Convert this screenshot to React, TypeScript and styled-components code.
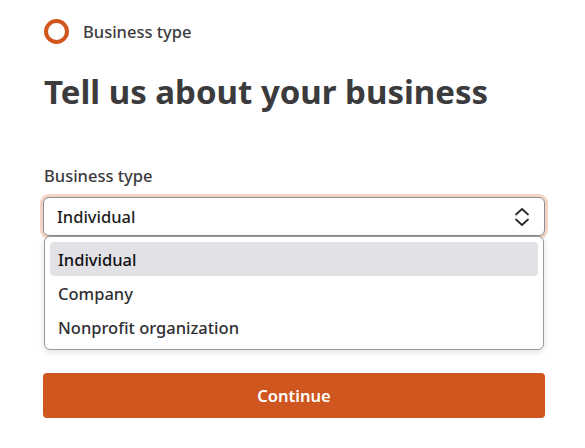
import * as React from 'react'
import styled, { createGlobalStyle } from 'styled-components';

const GlobalStyle = createGlobalStyle`
    body {
        margin: 0;
        background: #ffffff;
        font-family: "Noto Sans", "Open Sans", sans-serif;
        color: #3b3b3d;
    }
`;

const Page = styled.div`
    width: 502px;
    padding: 18px 0 0 43px;
`;

const Step = styled.div`
    display: flex;
    align-items: center;
    gap: 14px;
    height: 26px;
    padding-left: 1px;
`;

const StepRing = styled.div`
    width: 17px;
    height: 17px;
    border-radius: 50%;
    border: 4px solid #d0561f;
`;

const StepText = styled.span`
    font-size: 16.5px;
    font-weight: 500;
    color: #3b3b3d;
`;

const Heading = styled.h1`
    margin: 26px 0 0 1px;
    font-size: 33px;
    line-height: 44px;
    font-weight: 700;
    color: #3b3b3d;
`;

const Label = styled.div`
    margin: 51px 0 0 1px;
    font-size: 16.5px;
    font-weight: 500;
    line-height: 22px;
`;

const Field = styled.div`
    position: relative;
    margin-top: 10px;
`;

const SelectBox = styled.button`
    display: flex;
    align-items: center;
    justify-content: space-between;
    width: 100%;
    height: 39px;
    padding: 0 14px 0 13px;
    background: #ffffff;
    border: 1px solid #8b8c90;
    border-radius: 6px;
    box-shadow: 0 0 0 3px #f2d4c5;
    font-family: inherit;
    font-size: 16.5px;
    font-weight: 500;
    color: #1f1f22;
    text-align: left;
`;

const Menu = styled.ul`
    position: absolute;
    top: 39px;
    left: 1px;
    right: 1px;
    margin: 0;
    padding: 5px 5px;
    list-style: none;
    background: #ffffff;
    border: 1px solid #9a9a9e;
    border-radius: 6px;
    box-shadow: 0 2px 6px rgba(0, 0, 0, 0.12);
`;

const Option = styled.li<{ $active?: boolean }>`
    height: 34px;
    display: flex;
    align-items: center;
    padding-left: 8px;
    border-radius: 4px;
    font-size: 16.5px;
    font-weight: 500;
    color: ${p => (p.$active ? '#111114' : '#2f2f33')};
    background: ${p => (p.$active ? '#e2e1e6' : 'transparent')};
`;

const ContinueButton = styled.button`
    display: block;
    width: 100%;
    height: 45px;
    margin-top: 137px;
    border: none;
    border-radius: 4px;
    background: #d0561f;
    color: #ffffff;
    font-family: inherit;
    font-size: 16.5px;
    font-weight: 600;
`;

const Chevrons = () => (
    <svg width="16" height="20" viewBox="0 0 16 20" fill="none" stroke="#2a2a2e" strokeWidth="1.8" strokeLinecap="round" strokeLinejoin="round">
        <path d="M2 7.5 8 2l6 5.5" />
        <path d="M2 12.5 8 18l6-5.5" />
    </svg>
);

const options = ['Individual', 'Company', 'Nonprofit organization'];

export default function App() {
    return (
        <Page>
            <GlobalStyle />
            <Step>
                <StepRing />
                <StepText>Business type</StepText>
            </Step>
            <Heading>Tell us about your business</Heading>
            <Label>Business type</Label>
            <Field>
                <SelectBox>
                    Individual
                    <Chevrons />
                </SelectBox>
                <Menu>
                    {options.map((o, i) => (
                        <Option key={o} $active={i === 0}>{o}</Option>
                    ))}
                </Menu>
            </Field>
            <ContinueButton>Continue</ContinueButton>
        </Page>
    );
}
